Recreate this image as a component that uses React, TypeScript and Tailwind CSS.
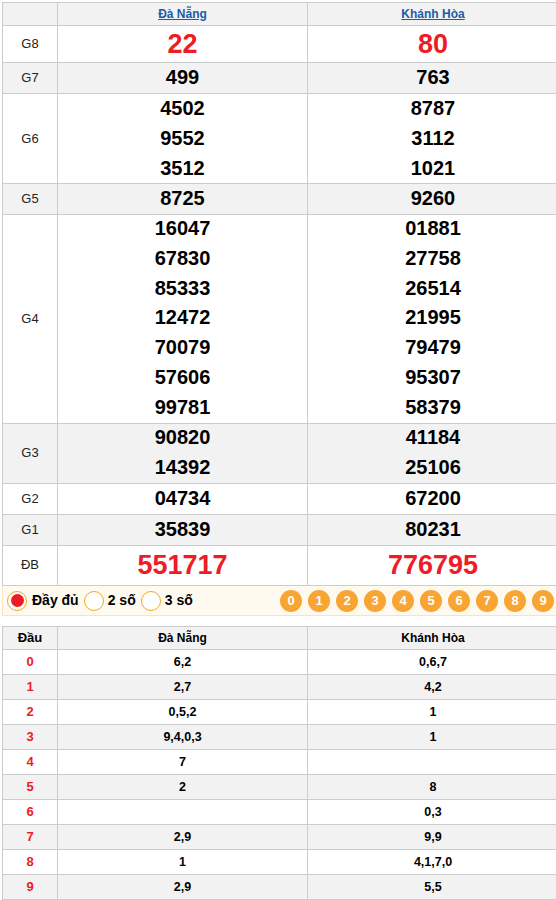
const font = "font-['Liberation_Sans',Arial,sans-serif]";

type Prize = { label: string; dn: string[]; kh: string[]; h: string; bg: string; big?: boolean };

const prizes: Prize[] = [
  { label: "G8", dn: ["22"], kh: ["80"], h: "h-[37px]", bg: "bg-white", big: true },
  { label: "G7", dn: ["499"], kh: ["763"], h: "h-[31px]", bg: "bg-[#f2f2f2]" },
  { label: "G6", dn: ["4502", "9552", "3512"], kh: ["8787", "3112", "1021"], h: "h-[90px]", bg: "bg-white" },
  { label: "G5", dn: ["8725"], kh: ["9260"], h: "h-[30px]", bg: "bg-[#f2f2f2]" },
  {
    label: "G4",
    dn: ["16047", "67830", "85333", "12472", "70079", "57606", "99781"],
    kh: ["01881", "27758", "26514", "21995", "79479", "95307", "58379"],
    h: "h-[209px]",
    bg: "bg-white",
  },
  { label: "G3", dn: ["90820", "14392"], kh: ["41184", "25106"], h: "h-[61px]", bg: "bg-[#f2f2f2]" },
  { label: "G2", dn: ["04734"], kh: ["67200"], h: "h-[31px]", bg: "bg-white" },
  { label: "G1", dn: ["35839"], kh: ["80231"], h: "h-[30px]", bg: "bg-[#f2f2f2]" },
  { label: "ĐB", dn: ["551717"], kh: ["776795"], h: "h-[41px]", bg: "bg-white", big: true },
];

const loto: [string, string, string][] = [
  ["0", "6,2", "0,6,7"],
  ["1", "2,7", "4,2"],
  ["2", "0,5,2", "1"],
  ["3", "9,4,0,3", "1"],
  ["4", "7", ""],
  ["5", "2", "8"],
  ["6", "", "0,3"],
  ["7", "2,9", "9,9"],
  ["8", "1", "4,1,7,0"],
  ["9", "2,9", "5,5"],
];

function Numbers({ items, big }: { items: string[]; big?: boolean }) {
  return (
    <div className="flex flex-col items-center justify-center border-r border-b border-[#cccccc]">
      {items.map((n, i) => (
        <div
          key={i}
          className={
            big
              ? "text-[27px] leading-[34px] font-bold text-[#ee1c25]"
              : "text-[20px] leading-[29.8px] font-bold text-black"
          }
        >
          {n}
        </div>
      ))}
    </div>
  );
}

export default function App() {
  return (
    <div className={`w-[556px] overflow-hidden bg-white pt-[2px] ${font}`}>
      <div className="ml-[2px] w-[556px] border-l border-t border-[#cccccc]">
        <div className="grid h-[23px] grid-cols-[55px_250px_251px] bg-[#f2f2f2]">
          <div className="border-r border-b border-[#cccccc]" />
          <div className="flex items-center justify-center border-r border-b border-[#cccccc]">
            <span className="text-[12px] font-bold text-[#1a5ca8] underline">Đà Nẵng</span>
          </div>
          <div className="flex items-center justify-center border-r border-b border-[#cccccc]">
            <span className="text-[12px] font-bold text-[#1a5ca8] underline">Khánh Hòa</span>
          </div>
        </div>
        {prizes.map((p) => (
          <div key={p.label} className={`grid grid-cols-[55px_250px_251px] ${p.h} ${p.bg}`}>
            <div className="flex items-center justify-center border-r border-b border-[#cccccc] text-[13px] text-[#222]">
              {p.label}
            </div>
            <Numbers items={p.dn} big={p.big} />
            <Numbers items={p.kh} big={p.big} />
          </div>
        ))}
      </div>

      <div className="ml-[2px] flex h-[30px] w-[556px] items-center border-l border-b border-[#fbe3bf] bg-[#fffaf0] pl-[4px]">
        <div className="flex items-center">
          <span className="flex h-[20px] w-[20px] items-center justify-center rounded-full border border-[#f5a623] bg-white">
            <span className="h-[13px] w-[13px] rounded-full bg-[#ee1c25]" />
          </span>
          <span className="ml-[5px] text-[14px] font-bold text-black">Đầy đủ</span>
        </div>
        <div className="ml-[5px] flex items-center">
          <span className="h-[20px] w-[20px] rounded-full border border-[#f5a623] bg-white" />
          <span className="ml-[4px] text-[14px] font-bold text-black">2 số</span>
        </div>
        <div className="ml-[5px] flex items-center">
          <span className="h-[20px] w-[20px] rounded-full border border-[#f5a623] bg-white" />
          <span className="ml-[4px] text-[14px] font-bold text-black">3 số</span>
        </div>
        <div className="ml-auto mr-[4px] flex gap-[6px]">
          {["0", "1", "2", "3", "4", "5", "6", "7", "8", "9"].map((d) => (
            <span
              key={d}
              className="flex h-[22px] w-[22px] items-center justify-center rounded-full bg-[#f9a533] text-[13px] font-bold text-white"
            >
              {d}
            </span>
          ))}
        </div>
      </div>

      <div className="mt-[10px] ml-[2px] w-[556px] border-l border-t border-[#cccccc]">
        <div className="grid h-[23px] grid-cols-[55px_250px_251px] bg-[#f2f2f2] text-[12px] font-bold text-black">
          <div className="flex items-center justify-center border-r border-b border-[#cccccc] text-[13px]">Đầu</div>
          <div className="flex items-center justify-center border-r border-b border-[#cccccc]">Đà Nẵng</div>
          <div className="flex items-center justify-center border-r border-b border-[#cccccc]">Khánh Hòa</div>
        </div>
        {loto.map(([d, a, b], i) => (
          <div
            key={d}
            className={`grid h-[25px] grid-cols-[55px_250px_251px] text-[12.5px] font-bold text-black ${
              i % 2 === 1 ? "bg-[#f2f2f2]" : "bg-white"
            }`}
          >
            <div className="flex items-center justify-center border-r border-b border-[#cccccc] text-[13px] text-[#ee1c25]">
              {d}
            </div>
            <div className="flex items-center justify-center border-r border-b border-[#cccccc]">{a}</div>
            <div className="flex items-center justify-center border-r border-b border-[#cccccc]">{b}</div>
          </div>
        ))}
      </div>
    </div>
  );
}
